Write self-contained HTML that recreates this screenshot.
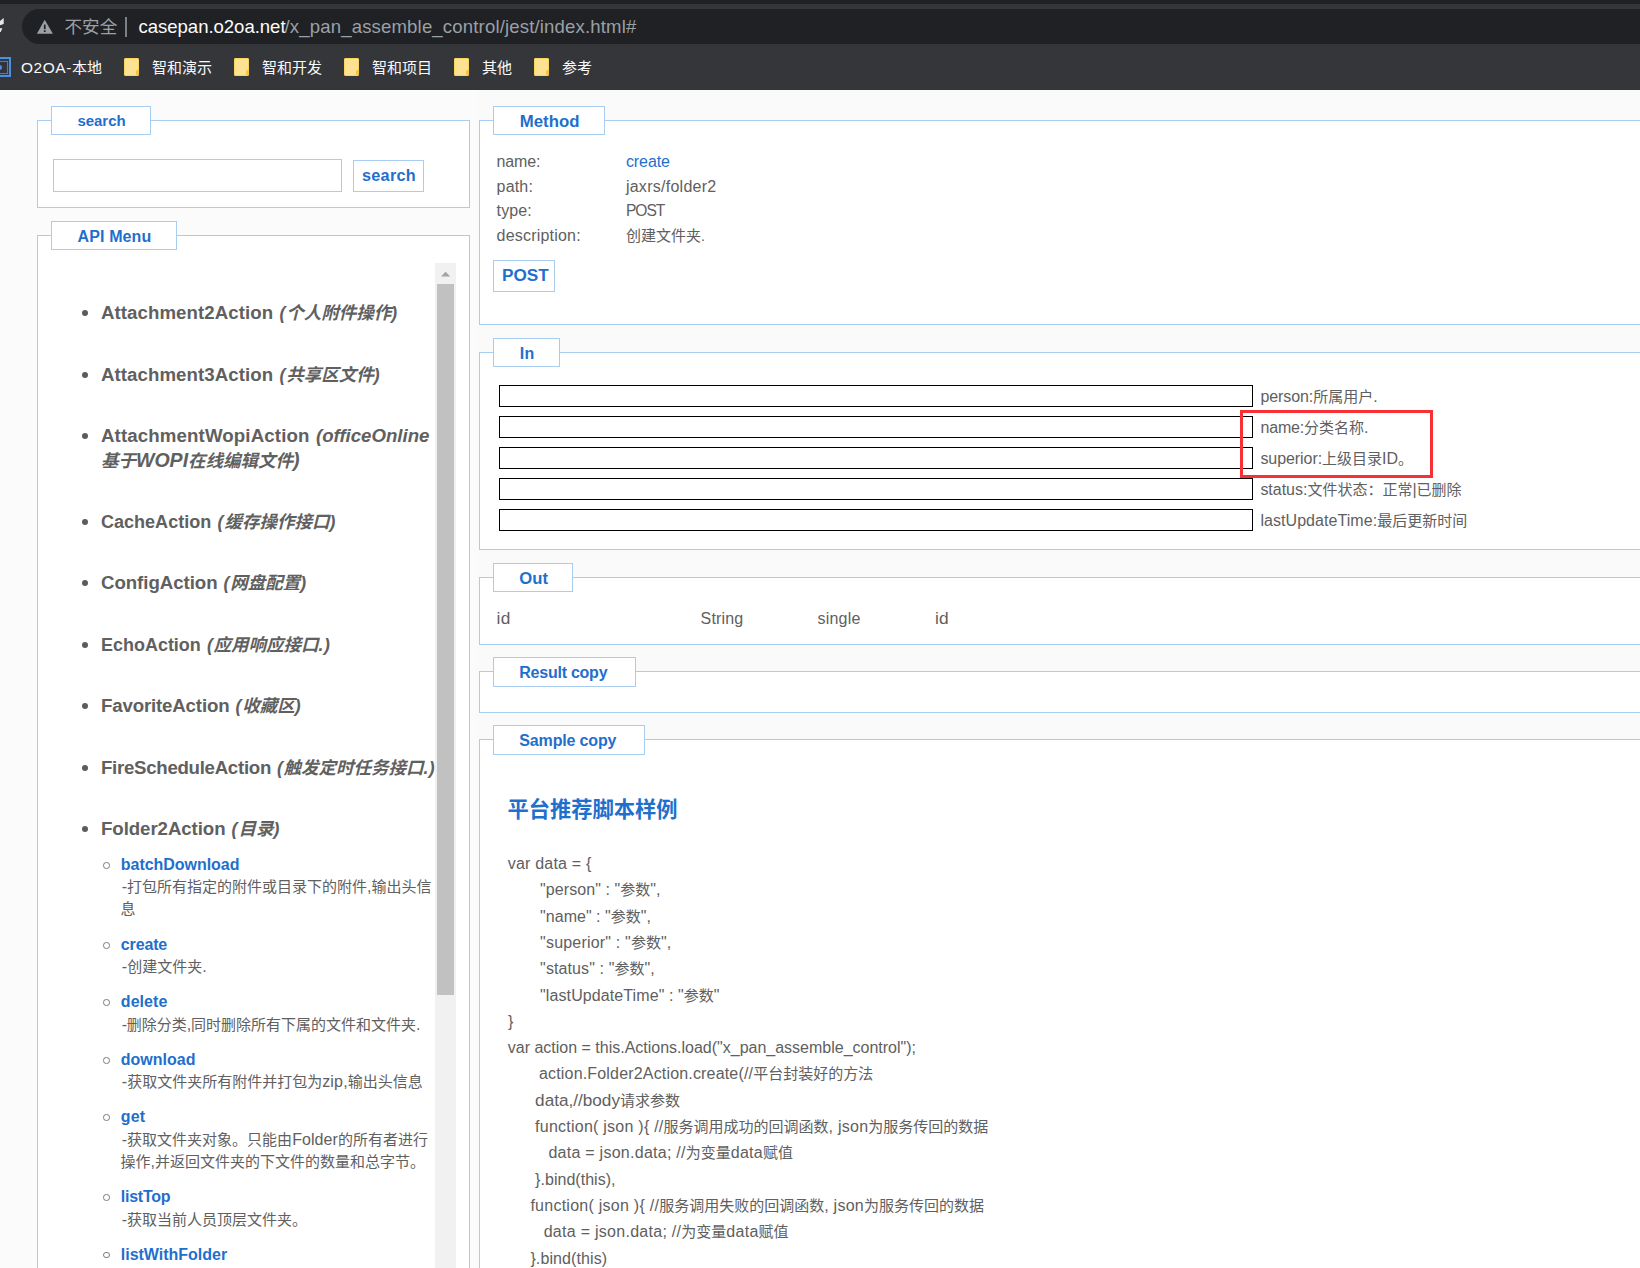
<!DOCTYPE html>
<html><head><meta charset="utf-8"><title>jest</title>
<style>
html,body{margin:0;padding:0;}
body{width:1640px;height:1268px;overflow:hidden;position:relative;background:#fbfbfb;font-family:"Liberation Sans","Noto Sans CJK SC",sans-serif;}
.t{position:absolute;white-space:nowrap;font-family:"Liberation Sans","Noto Sans CJK SC",sans-serif;}
input{margin:0;padding:0;outline:none;border-radius:0;-webkit-appearance:none;appearance:none;}
.b{position:absolute;box-sizing:border-box;}
.fs{position:absolute;box-sizing:border-box;border:1px solid #a8cdf1;background:#fff;}
.lg{position:absolute;box-sizing:border-box;border:1px solid #a8cdf1;background:#fff;}
.inp{position:absolute;box-sizing:border-box;border:1px solid #000;background:#fff;left:499px;width:754px;height:22px;}
.fold{position:absolute;width:15px;height:18px;top:58px;background:#fde293;border-radius:2px;box-shadow:inset 0 0 0 1px #fbd560;}
.fold i{position:absolute;right:0;bottom:1px;width:3px;height:5px;background:#f6c445;border-radius:1px 0 0 0;}
.dot{position:absolute;width:6px;height:6px;border-radius:50%;background:#5c5c5c;}
.cir{position:absolute;width:6.6px;height:6.6px;box-sizing:border-box;border-radius:50%;border:1.25px solid #7c7c7c;}
</style></head><body>

<div class="b" style="left:477px;top:90px;width:1200px;height:1200px;background:#fafafa;"></div>
<div class="b" style="left:0;top:0;width:1640px;height:90px;background:#35363a;"></div>
<div class="b" style="left:0;top:0;width:1640px;height:4px;background:#202124;"></div>
<div class="b" style="left:22px;top:9px;width:1660px;height:35px;background:#202124;border-radius:17.5px;"></div>
<svg class="b" style="left:0;top:14px;" width="8" height="22" viewBox="0 0 8 22"><path d="M0 7 L3.7 4 L3.7 10 L0 11.3 Z M0 14.2 L2.4 14.2 L0.7 17.9 L0 17.9Z" fill="#e4e6e9"/></svg>
<svg class="b" style="left:36px;top:19px;" width="18" height="16" viewBox="0 0 18 16"><path d="M8.7 0.8 L16.9 14.8 L0.9 14.8 Z" fill="#9aa0a6"/><rect x="7.9" y="5.6" width="1.7" height="4.6" fill="#202124"/><rect x="7.9" y="11.3" width="1.7" height="1.7" fill="#202124"/></svg>
<div class="b" style="left:125px;top:17px;width:1.5px;height:20px;background:#7d8186;"></div>
<div class="b" style="left:-6px;top:57px;width:17px;height:20px;background:#2b3a50;border:2.5px solid #4a90e2;"></div>
<div class="b" style="left:-6px;top:60.5px;width:13.5px;height:13px;background:#30343b;border:1.5px solid #3f7fd2;"></div>
<div class="b" style="left:-3px;top:64.5px;width:5px;height:5px;border-radius:50%;background:#4a90e2;"></div>
<div class="fold" style="left:124.0px"><i></i></div>
<div class="fold" style="left:234.0px"><i></i></div>
<div class="fold" style="left:344.0px"><i></i></div>
<div class="fold" style="left:454.0px"><i></i></div>
<div class="fold" style="left:534.0px"><i></i></div>
<div class="fs" style="left:37px;top:120px;width:433px;height:88px;"></div>
<div class="fs" style="left:37px;top:235px;width:433px;height:1066px;"></div>
<div class="fs" style="left:479px;top:120px;width:1222px;height:205px;"></div>
<div class="fs" style="left:479px;top:352px;width:1222px;height:198px;"></div>
<div class="fs" style="left:479px;top:577px;width:1222px;height:68px;"></div>
<div class="fs" style="left:479px;top:671px;width:1222px;height:42px;"></div>
<div class="fs" style="left:479px;top:739px;width:1222px;height:562px;"></div>
<div class="lg" style="left:51px;top:106px;width:100px;height:29px;"></div>
<div class="lg" style="left:51px;top:221px;width:126px;height:29px;"></div>
<div class="lg" style="left:493px;top:106px;width:112px;height:29px;"></div>
<div class="lg" style="left:493px;top:338px;width:67px;height:29px;"></div>
<div class="lg" style="left:493px;top:563px;width:80px;height:29px;"></div>
<div class="lg" style="left:493px;top:657px;width:143px;height:30px;"></div>
<div class="lg" style="left:493px;top:725px;width:152px;height:30px;"></div>
<input type="text" class="lg" style="left:53px;top:159px;width:289px;height:33px;">
<div class="lg" style="left:353px;top:160px;width:71px;height:32px;"></div>
<div class="lg" style="left:493px;top:260px;width:62px;height:32px;"></div>
<div class="b" style="left:435px;top:263px;width:21px;height:1010px;background:#f1f1f1;"></div>
<div class="b" style="left:437px;top:284px;width:17px;height:711px;background:#c1c1c1;"></div>
<svg class="b" style="left:440px;top:270px;" width="12" height="8" viewBox="0 0 12 8"><path d="M1 6.5 L5.6 1.8 L10.2 6.5 Z" fill="#a3a3a3"/></svg>
<div class="dot" style="left:82.3px;top:310.3px"></div>
<div class="dot" style="left:82.3px;top:371.9px"></div>
<div class="dot" style="left:82.3px;top:432.6px"></div>
<div class="dot" style="left:82.3px;top:519.1px"></div>
<div class="dot" style="left:82.3px;top:580.2px"></div>
<div class="dot" style="left:82.3px;top:642.0px"></div>
<div class="dot" style="left:82.3px;top:702.8px"></div>
<div class="dot" style="left:82.3px;top:764.6px"></div>
<div class="dot" style="left:82.3px;top:825.6px"></div>
<div class="cir" style="left:103px;top:862.1px"></div>
<div class="cir" style="left:103px;top:942.4px"></div>
<div class="cir" style="left:103px;top:999.4px"></div>
<div class="cir" style="left:103px;top:1057.0px"></div>
<div class="cir" style="left:103px;top:1114.1px"></div>
<div class="cir" style="left:103px;top:1194.3px"></div>
<div class="cir" style="left:103px;top:1251.7px"></div>
<input type="text" class="inp" style="top:385px">
<input type="text" class="inp" style="top:416px">
<input type="text" class="inp" style="top:447px">
<input type="text" class="inp" style="top:478px">
<input type="text" class="inp" style="top:509px">
<div class="b" style="left:1240px;top:410px;width:193px;height:68px;border:3px solid #f82f34;"></div>
<div class="t " id="t0" style="left:64.5px;top:14.9px;font-size:17.60px;line-height:24px;color:#9aa0a6;">不安全</div>
<div class="t " id="t1" style="left:138.5px;top:14.6px;font-size:17.40px;line-height:24px;color:#fcfcfc;"><span style="font-size:18.57px;letter-spacing:-0.037px;">casepan.o2oa.net</span></div>
<div class="t " id="t2" style="left:284.5px;top:14.6px;font-size:17.40px;line-height:24px;color:#9aa0a6;"><span style="font-size:18.57px;letter-spacing:0.158px;">/x_pan_assemble_control/jest/index.html#</span></div>
<div class="t " id="t3" style="left:21.0px;top:57.9px;font-size:15.00px;line-height:20px;color:#fafafa;"><span style="font-size:15.45px;letter-spacing:0.588px;">O2OA-</span>本地</div>
<div class="t " id="t4" style="left:152.0px;top:57.6px;font-size:15.00px;line-height:20px;color:#fafafa;">智和演示</div>
<div class="t " id="t5" style="left:262.0px;top:57.6px;font-size:15.00px;line-height:20px;color:#fafafa;">智和开发</div>
<div class="t " id="t6" style="left:372.0px;top:57.6px;font-size:15.00px;line-height:20px;color:#fafafa;">智和项目</div>
<div class="t " id="t7" style="left:482.0px;top:57.6px;font-size:15.00px;line-height:20px;color:#fafafa;">其他</div>
<div class="t " id="t8" style="left:562.0px;top:57.6px;font-size:15.00px;line-height:20px;color:#fafafa;">参考</div>
<div class="t " id="t9" style="left:77.4px;top:111.4px;font-size:15.00px;line-height:20px;color:#1f6fcd;font-weight:bold;"><span style="font-size:14.98px;letter-spacing:0.003px;">search</span></div>
<div class="t " id="t10" style="left:77.6px;top:226.6px;font-size:15.00px;line-height:20px;color:#1f6fcd;font-weight:bold;"><span style="font-size:16.00px;letter-spacing:0.114px;">API&nbsp;Menu</span></div>
<div class="t " id="t11" style="left:519.8px;top:111.8px;font-size:15.00px;line-height:20px;color:#1f6fcd;font-weight:bold;"><span style="font-size:16.80px;letter-spacing:0.007px;">Method</span></div>
<div class="t " id="t12" style="left:519.8px;top:343.6px;font-size:15.00px;line-height:20px;color:#1f6fcd;font-weight:bold;"><span style="font-size:16.00px;letter-spacing:0.241px;">In</span></div>
<div class="t " id="t13" style="left:519.3px;top:568.8px;font-size:15.00px;line-height:20px;color:#1f6fcd;font-weight:bold;"><span style="font-size:16.67px;letter-spacing:0.004px;">Out</span></div>
<div class="t " id="t14" style="left:519.3px;top:663.1px;font-size:15.00px;line-height:20px;color:#1f6fcd;font-weight:bold;"><span style="font-size:16.00px;letter-spacing:-0.244px;">Result&nbsp;copy</span></div>
<div class="t " id="t15" style="left:519.3px;top:731.1px;font-size:15.00px;line-height:20px;color:#1f6fcd;font-weight:bold;"><span style="font-size:16.00px;letter-spacing:-0.155px;">Sample&nbsp;copy</span></div>
<div class="t ar" id="t16" style="left:362.0px;top:165.4px;font-size:15.20px;line-height:20px;color:#1f6fcd;font-weight:bold;"><span style="font-size:16.22px;letter-spacing:0.292px;">search</span></div>
<div class="t " id="t17" style="left:101.0px;top:301.3px;font-size:17.50px;line-height:24px;color:#606060;font-weight:bold;"><span style="font-size:18.67px;letter-spacing:0.069px;">Attachment2Action</span></div>
<div class="t " id="t18" style="left:279.4px;top:301.2px;font-size:17.50px;line-height:24px;color:#606060;font-weight:bold;font-style:italic;"><span style="font-size:17.50px;letter-spacing:0.922px;">(</span>个人附件操作<span style="font-size:17.50px;letter-spacing:0.922px;">)</span></div>
<div class="t " id="t19" style="left:101.0px;top:362.9px;font-size:17.50px;line-height:24px;color:#606060;font-weight:bold;"><span style="font-size:18.67px;letter-spacing:0.069px;">Attachment3Action</span></div>
<div class="t " id="t20" style="left:279.4px;top:362.8px;font-size:17.50px;line-height:24px;color:#606060;font-weight:bold;font-style:italic;"><span style="font-size:17.50px;letter-spacing:1.072px;">(</span>共享区文件<span style="font-size:17.50px;letter-spacing:1.072px;">)</span></div>
<div class="t " id="t21" style="left:101.0px;top:423.6px;font-size:17.50px;line-height:24px;color:#606060;font-weight:bold;"><span style="font-size:18.67px;letter-spacing:0.130px;">AttachmentWopiAction</span></div>
<div class="t " id="t22" style="left:316.0px;top:423.6px;font-size:17.50px;line-height:24px;color:#606060;font-weight:bold;font-style:italic;"><span style="font-size:18.67px;letter-spacing:-0.022px;">(officeOnline</span></div>
<div class="t " id="t23" style="left:101.0px;top:510.3px;font-size:17.50px;line-height:24px;color:#606060;font-weight:bold;"><span style="font-size:18.04px;letter-spacing:-0.002px;">CacheAction</span></div>
<div class="t " id="t24" style="left:217.5px;top:510.0px;font-size:17.50px;line-height:24px;color:#606060;font-weight:bold;font-style:italic;"><span style="font-size:17.50px;letter-spacing:1.072px;">(</span>缓存操作接口<span style="font-size:17.50px;letter-spacing:1.072px;">)</span></div>
<div class="t " id="t25" style="left:101.0px;top:571.2px;font-size:17.50px;line-height:24px;color:#606060;font-weight:bold;"><span style="font-size:18.67px;letter-spacing:-0.049px;">ConfigAction</span></div>
<div class="t " id="t26" style="left:223.5px;top:571.1px;font-size:17.50px;line-height:24px;color:#606060;font-weight:bold;font-style:italic;"><span style="font-size:17.50px;letter-spacing:0.922px;">(</span>网盘配置<span style="font-size:17.50px;letter-spacing:0.922px;">)</span></div>
<div class="t " id="t27" style="left:101.0px;top:632.8px;font-size:17.50px;line-height:24px;color:#606060;font-weight:bold;"><span style="font-size:17.98px;letter-spacing:-0.004px;">EchoAction</span></div>
<div class="t " id="t28" style="left:207.0px;top:632.9px;font-size:17.50px;line-height:24px;color:#606060;font-weight:bold;font-style:italic;"><span style="font-size:17.50px;letter-spacing:0.656px;">(</span>应用响应接口<span style="font-size:17.50px;letter-spacing:0.656px;">.)</span></div>
<div class="t " id="t29" style="left:101.0px;top:693.8px;font-size:17.50px;line-height:24px;color:#606060;font-weight:bold;"><span style="font-size:18.67px;letter-spacing:-0.159px;">FavoriteAction</span></div>
<div class="t " id="t30" style="left:235.5px;top:693.7px;font-size:17.50px;line-height:24px;color:#606060;font-weight:bold;font-style:italic;"><span style="font-size:17.50px;letter-spacing:0.822px;">(</span>收藏区<span style="font-size:17.50px;letter-spacing:0.822px;">)</span></div>
<div class="t " id="t31" style="left:101.0px;top:755.6px;font-size:17.50px;line-height:24px;color:#606060;font-weight:bold;"><span style="font-size:18.67px;letter-spacing:-0.289px;">FireScheduleAction</span></div>
<div class="t " id="t32" style="left:277.0px;top:755.5px;font-size:17.50px;line-height:24px;color:#606060;font-weight:bold;font-style:italic;"><span style="font-size:17.50px;letter-spacing:0.556px;">(</span>触发定时任务接口<span style="font-size:17.50px;letter-spacing:0.556px;">.)</span></div>
<div class="t " id="t33" style="left:101.0px;top:816.6px;font-size:17.50px;line-height:24px;color:#606060;font-weight:bold;"><span style="font-size:18.67px;letter-spacing:-0.071px;">Folder2Action</span></div>
<div class="t " id="t34" style="left:231.5px;top:816.5px;font-size:17.50px;line-height:24px;color:#606060;font-weight:bold;font-style:italic;"><span style="font-size:17.50px;letter-spacing:1.122px;">(</span>目录<span style="font-size:17.50px;letter-spacing:1.122px;">)</span></div>
<div class="t " id="t35" style="left:101.0px;top:447.8px;font-size:17.50px;line-height:24px;color:#606060;font-weight:bold;font-style:italic;">基于<span style="font-size:19.55px;letter-spacing:-0.002px;">WOPI</span>在线编辑文件<span style="font-size:19.55px;letter-spacing:-0.002px;">)</span></div>
<div class="t " id="t36" style="left:120.8px;top:853.9px;font-size:15.00px;line-height:22px;color:#1f6fcd;font-weight:bold;"><span style="font-size:16.00px;letter-spacing:-0.039px;">batchDownload</span></div>
<div class="t " id="t37" style="left:121.7px;top:876.0px;font-size:15.00px;line-height:22px;color:#606060;"><span style="font-size:16.00px;letter-spacing:-0.056px;">-</span>打包所有指定的附件或目录下的附件<span style="font-size:16.00px;letter-spacing:-0.056px;">,</span>输出头信</div>
<div class="t " id="t38" style="left:120.6px;top:897.8px;font-size:15.00px;line-height:22px;color:#606060;">息</div>
<div class="t " id="t39" style="left:120.8px;top:934.2px;font-size:15.00px;line-height:22px;color:#1f6fcd;font-weight:bold;"><span style="font-size:16.00px;letter-spacing:-0.143px;">create</span></div>
<div class="t " id="t40" style="left:121.7px;top:956.2px;font-size:15.00px;line-height:22px;color:#606060;"><span style="font-size:16.00px;letter-spacing:0.102px;">-</span>创建文件夹<span style="font-size:16.00px;letter-spacing:0.102px;">.</span></div>
<div class="t " id="t41" style="left:120.8px;top:991.2px;font-size:15.00px;line-height:22px;color:#1f6fcd;font-weight:bold;"><span style="font-size:16.00px;letter-spacing:0.058px;">delete</span></div>
<div class="t " id="t42" style="left:121.7px;top:1013.7px;font-size:15.00px;line-height:22px;color:#606060;"><span style="font-size:16.00px;letter-spacing:-0.222px;">-</span>删除分类<span style="font-size:16.00px;letter-spacing:-0.222px;">,</span>同时删除所有下属的文件和文件夹<span style="font-size:16.00px;letter-spacing:-0.222px;">.</span></div>
<div class="t " id="t43" style="left:120.8px;top:1048.8px;font-size:15.00px;line-height:22px;color:#1f6fcd;font-weight:bold;"><span style="font-size:16.00px;letter-spacing:0.005px;">download</span></div>
<div class="t " id="t44" style="left:121.7px;top:1071.2px;font-size:15.00px;line-height:22px;color:#606060;"><span style="font-size:16.00px;letter-spacing:0.167px;">-</span>获取文件夹所有附件并打包为<span style="font-size:16.00px;letter-spacing:0.167px;">zip,</span>输出头信息</div>
<div class="t " id="t45" style="left:120.8px;top:1105.9px;font-size:15.00px;line-height:22px;color:#1f6fcd;font-weight:bold;"><span style="font-size:16.00px;letter-spacing:0.200px;">get</span></div>
<div class="t " id="t46" style="left:121.7px;top:1128.5px;font-size:15.00px;line-height:22px;color:#606060;"><span style="font-size:16.00px;letter-spacing:0.083px;">-</span>获取文件夹对象。只能由<span style="font-size:16.00px;letter-spacing:0.083px;">Folder</span>的所有者进行</div>
<div class="t " id="t47" style="left:120.5px;top:1151.0px;font-size:15.00px;line-height:22px;color:#606060;">操作<span style="font-size:16.00px;">,</span>并返回文件夹的下文件的数量和总字节。</div>
<div class="t " id="t48" style="left:120.8px;top:1186.1px;font-size:15.00px;line-height:22px;color:#1f6fcd;font-weight:bold;"><span style="font-size:16.00px;letter-spacing:-0.250px;">listTop</span></div>
<div class="t " id="t49" style="left:121.7px;top:1208.7px;font-size:15.00px;line-height:22px;color:#606060;"><span style="font-size:16.00px;">-</span>获取当前人员顶层文件夹。</div>
<div class="t " id="t50" style="left:120.8px;top:1243.5px;font-size:15.00px;line-height:22px;color:#1f6fcd;font-weight:bold;"><span style="font-size:16.00px;letter-spacing:-0.015px;">listWithFolder</span></div>
<div class="t " id="t51" style="left:496.6px;top:151.0px;font-size:15.00px;line-height:22px;color:#606060;"><span style="font-size:16.00px;letter-spacing:-0.134px;">name:</span></div>
<div class="t " id="t52" style="left:625.9px;top:151.0px;font-size:15.00px;line-height:22px;color:#1f6fcd;"><span style="font-size:16.00px;letter-spacing:-0.078px;">create</span></div>
<div class="t " id="t53" style="left:496.6px;top:175.5px;font-size:15.00px;line-height:22px;color:#606060;"><span style="font-size:16.00px;letter-spacing:0.161px;">path:</span></div>
<div class="t " id="t54" style="left:625.9px;top:175.5px;font-size:15.00px;line-height:22px;color:#606060;"><span style="font-size:16.00px;letter-spacing:0.265px;">jaxrs/folder2</span></div>
<div class="t " id="t55" style="left:496.6px;top:199.5px;font-size:15.00px;line-height:22px;color:#606060;"><span style="font-size:16.00px;letter-spacing:0.102px;">type:</span></div>
<div class="t " id="t56" style="left:625.9px;top:199.6px;font-size:15.00px;line-height:22px;color:#606060;"><span style="font-size:15.60px;letter-spacing:-0.992px;">POST</span></div>
<div class="t " id="t57" style="left:496.6px;top:224.5px;font-size:15.00px;line-height:22px;color:#606060;"><span style="font-size:16.00px;letter-spacing:0.198px;">description:</span></div>
<div class="t " id="t58" style="left:625.9px;top:224.5px;font-size:15.00px;line-height:22px;color:#606060;">创建文件夹<span style="font-size:14.40px;letter-spacing:-0.316px;">.</span></div>
<div class="t ar" id="t59" style="left:502.0px;top:264.7px;font-size:15.50px;line-height:20px;color:#1f6fcd;font-weight:bold;"><span style="font-size:17.19px;letter-spacing:0.001px;">POST</span></div>
<div class="t " id="t60" style="left:1260.4px;top:386.0px;font-size:15.00px;line-height:22px;color:#606060;"><span style="font-size:16.00px;letter-spacing:-0.080px;">person:</span>所属用户<span style="font-size:16.00px;letter-spacing:-0.080px;">.</span></div>
<div class="t " id="t61" style="left:1260.4px;top:417.0px;font-size:15.00px;line-height:22px;color:#606060;"><span style="font-size:16.00px;letter-spacing:-0.156px;">name:</span>分类名称<span style="font-size:16.00px;letter-spacing:-0.156px;">.</span></div>
<div class="t " id="t62" style="left:1260.4px;top:448.0px;font-size:15.00px;line-height:22px;color:#606060;"><span style="font-size:16.00px;letter-spacing:-0.062px;">superior:</span>上级目录<span style="font-size:16.00px;letter-spacing:-0.062px;">ID</span>。</div>
<div class="t " id="t63" style="left:1260.4px;top:479.0px;font-size:15.00px;line-height:22px;color:#606060;"><span style="font-size:16.00px;letter-spacing:-0.016px;">status:</span>文件状态：正常<span style="font-size:16.00px;letter-spacing:-0.016px;">|</span>已删除</div>
<div class="t " id="t64" style="left:1260.4px;top:510.0px;font-size:15.00px;line-height:22px;color:#606060;"><span style="font-size:16.00px;letter-spacing:0.059px;">lastUpdateTime:</span>最后更新时间</div>
<div class="t " id="t65" style="left:496.6px;top:606.7px;font-size:15.00px;line-height:22px;color:#606060;"><span style="font-size:17.29px;letter-spacing:0.223px;">id</span></div>
<div class="t " id="t66" style="left:700.6px;top:607.7px;font-size:15.00px;line-height:22px;color:#606060;"><span style="font-size:16.00px;letter-spacing:0.151px;">String</span></div>
<div class="t " id="t67" style="left:817.5px;top:607.7px;font-size:15.00px;line-height:22px;color:#606060;"><span style="font-size:16.00px;letter-spacing:0.215px;">single</span></div>
<div class="t " id="t68" style="left:935.0px;top:606.7px;font-size:15.00px;line-height:22px;color:#606060;"><span style="font-size:17.29px;letter-spacing:0.123px;">id</span></div>
<div class="t " id="t69" style="left:507.5px;top:795.6px;font-size:21.25px;line-height:28px;color:#1f6fcd;font-weight:bold;">平台推荐脚本样例</div>
<div class="t " id="t70" style="left:507.8px;top:852.0px;font-size:15.00px;line-height:24px;color:#606060;"><span style="font-size:16.00px;letter-spacing:0.192px;">var&nbsp;data&nbsp;=&nbsp;{</span></div>
<div class="t " id="t71" style="left:540.1px;top:878.3px;font-size:15.00px;line-height:24px;color:#606060;"><span style="font-size:16.00px;letter-spacing:0.076px;">"person"&nbsp;:&nbsp;"</span>参数<span style="font-size:16.00px;letter-spacing:0.076px;">",</span></div>
<div class="t " id="t72" style="left:540.1px;top:904.6px;font-size:15.00px;line-height:24px;color:#606060;"><span style="font-size:16.00px;letter-spacing:0.021px;">"name"&nbsp;:&nbsp;"</span>参数<span style="font-size:16.00px;letter-spacing:0.021px;">",</span></div>
<div class="t " id="t73" style="left:540.1px;top:930.9px;font-size:15.00px;line-height:24px;color:#606060;"><span style="font-size:16.00px;letter-spacing:0.186px;">"superior"&nbsp;:&nbsp;"</span>参数<span style="font-size:16.00px;letter-spacing:0.186px;">",</span></div>
<div class="t " id="t74" style="left:540.1px;top:957.2px;font-size:15.00px;line-height:24px;color:#606060;"><span style="font-size:16.00px;letter-spacing:0.107px;">"status"&nbsp;:&nbsp;"</span>参数<span style="font-size:16.00px;letter-spacing:0.107px;">",</span></div>
<div class="t " id="t75" style="left:540.1px;top:983.5px;font-size:15.00px;line-height:24px;color:#606060;"><span style="font-size:16.00px;letter-spacing:0.094px;">"lastUpdateTime"&nbsp;:&nbsp;"</span>参数<span style="font-size:16.00px;letter-spacing:0.094px;">"</span></div>
<div class="t " id="t76" style="left:508.0px;top:1009.8px;font-size:15.00px;line-height:24px;color:#606060;"><span style="font-size:16.00px;letter-spacing:0.056px;">}</span></div>
<div class="t " id="t77" style="left:507.8px;top:1036.1px;font-size:15.00px;line-height:24px;color:#606060;"><span style="font-size:16.00px;letter-spacing:-0.005px;">var&nbsp;action&nbsp;=&nbsp;this.Actions.load("x_pan_assemble_control");</span></div>
<div class="t " id="t78" style="left:539.0px;top:1062.4px;font-size:15.00px;line-height:24px;color:#606060;"><span style="font-size:16.00px;letter-spacing:0.173px;">action.Folder2Action.create(//</span>平台封装好的方法</div>
<div class="t " id="t79" style="left:535.1px;top:1087.8px;font-size:15.00px;line-height:24px;color:#606060;"><span style="font-size:17.16px;letter-spacing:-0.002px;">data,//body</span>请求参数</div>
<div class="t " id="t80" style="left:535.1px;top:1115.0px;font-size:15.00px;line-height:24px;color:#606060;"><span style="font-size:16.00px;letter-spacing:0.242px;">function(&nbsp;json&nbsp;){&nbsp;//</span>服务调用成功的回调函数<span style="font-size:16.00px;letter-spacing:0.242px;">,&nbsp;json</span>为服务传回的数据</div>
<div class="t " id="t81" style="left:548.4px;top:1141.3px;font-size:15.00px;line-height:24px;color:#606060;"><span style="font-size:16.00px;letter-spacing:0.264px;">data&nbsp;=&nbsp;json.data;&nbsp;//</span>为变量<span style="font-size:16.00px;letter-spacing:0.264px;">data</span>赋值</div>
<div class="t " id="t82" style="left:535.1px;top:1167.6px;font-size:15.00px;line-height:24px;color:#606060;"><span style="font-size:16.00px;letter-spacing:0.035px;">}.bind(this),</span></div>
<div class="t " id="t83" style="left:530.4px;top:1193.9px;font-size:15.00px;line-height:24px;color:#606060;"><span style="font-size:16.00px;letter-spacing:0.257px;">function(&nbsp;json&nbsp;){&nbsp;//</span>服务调用失败的回调函数<span style="font-size:16.00px;letter-spacing:0.257px;">,&nbsp;json</span>为服务传回的数据</div>
<div class="t " id="t84" style="left:543.7px;top:1220.2px;font-size:15.00px;line-height:24px;color:#606060;"><span style="font-size:16.00px;letter-spacing:0.276px;">data&nbsp;=&nbsp;json.data;&nbsp;//</span>为变量<span style="font-size:16.00px;letter-spacing:0.276px;">data</span>赋值</div>
<div class="t " id="t85" style="left:530.4px;top:1246.5px;font-size:15.00px;line-height:24px;color:#606060;"><span style="font-size:16.00px;letter-spacing:0.109px;">}.bind(this)</span></div>
</body></html>
